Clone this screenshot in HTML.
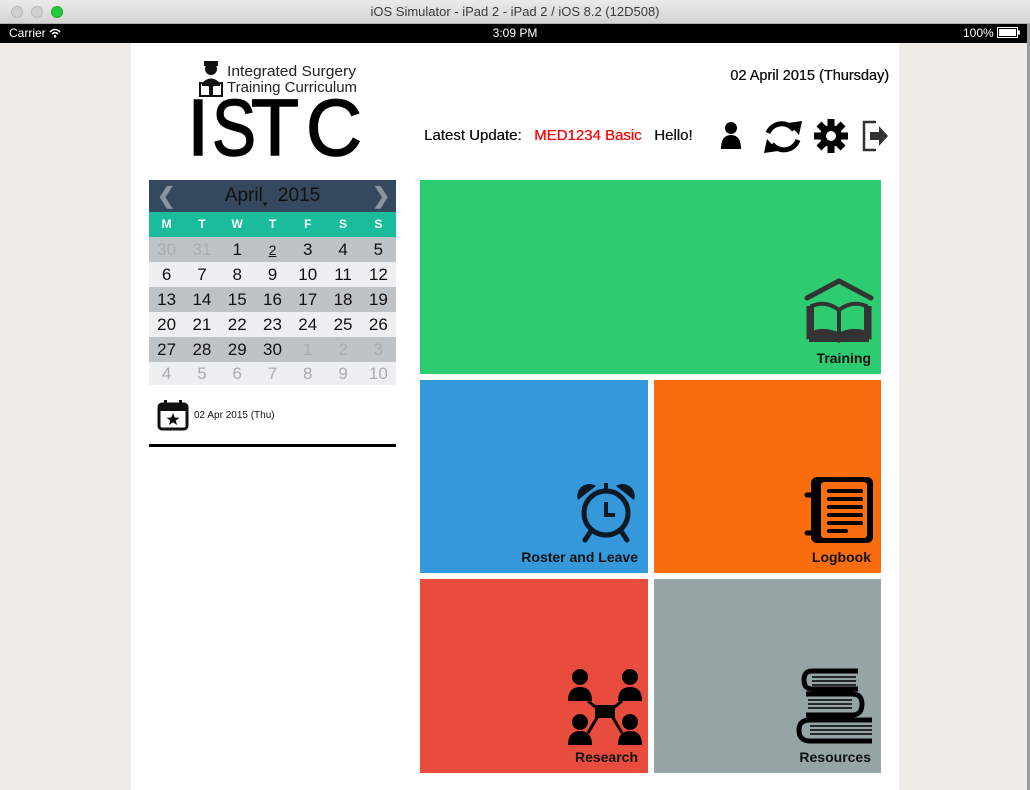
<!DOCTYPE html>
<html><head><meta charset="utf-8">
<style>
*{margin:0;padding:0;box-sizing:border-box}
body{width:1030px;height:790px;overflow:hidden;background:#eeebe6;font-family:"Liberation Sans",sans-serif;position:relative}
.abs{position:absolute}
#title{left:0;top:0;width:1030px;height:24px;background:linear-gradient(#ebebeb,#d4d4d4);border-bottom:1px solid #b0b0b0;text-align:center;font-size:13px;line-height:24px;color:#3c3c3c}
.dot{position:absolute;top:6px;width:12px;height:12px;border-radius:50%;background:#d0d0d0;border:1px solid #b8b8b8}
#status{left:0;top:24px;width:1027px;height:19px;background:#000;color:#fff;font-size:12px;line-height:19px}
#page{left:131px;top:43px;width:768px;height:747px;background:#fff}
.cal{left:149px;width:247px}
.row{position:absolute;left:149px;width:247px;height:25px;display:flex}
.row span{flex:1;text-align:center;font-size:17px;line-height:26px;color:#111}
.row span.g{color:#a9adb0}
.tile{position:absolute}
.lab{position:absolute;right:10px;bottom:8px;font-weight:bold;font-size:14px;color:#111}
</style></head><body>
<div id="title" class="abs">iOS Simulator - iPad 2 - iPad 2 / iOS 8.2 (12D508)
<div class="dot" style="left:11px"></div><div class="dot" style="left:31px"></div><div class="dot" style="left:51px;background:#27c93f;border-color:#1aab29"></div></div>
<div id="status" class="abs"><span class="abs" style="left:9px">Carrier <svg width="12" height="10" viewBox="0 0 12 10" style="vertical-align:-1px"><path d="M1 4Q6 -1 11 4M3 6Q6 3 9 6" stroke="#fff" stroke-width="1.5" fill="none"/><circle cx="6" cy="8.3" r="1.3" fill="#fff"/></svg></span>
<span class="abs" style="left:0;width:1030px;text-align:center">3:09 PM</span>
<span class="abs" style="left:963px">100% <svg width="24" height="11" viewBox="0 0 24 11" style="vertical-align:-1px"><rect x="0.5" y="0.5" width="20" height="10" fill="none" stroke="#fff"/><rect x="2" y="2" width="17" height="7" fill="#fff"/><rect x="21" y="3.5" width="2" height="4" fill="#fff"/></svg></span></div>
<div id="page" class="abs"></div>

<!-- logo -->
<svg class="abs" style="left:190px;top:58px" width="180" height="102" viewBox="0 0 180 102">
<circle cx="21" cy="11" r="6" fill="#111"/><rect x="14" y="3" width="14" height="5" fill="#111"/>
<path d="M12 25 Q21 16 30 25 V28 H12Z" fill="#111"/>
<path d="M10 25 V38 H20 V28 Q15 25 10 25Z M32 25 V38 H22 V28 Q27 25 32 25Z" fill="none" stroke="#111" stroke-width="2"/>
<text x="37" y="18" font-family="Liberation Sans" font-size="14.5" fill="#222" textLength="129" lengthAdjust="spacingAndGlyphs">Integrated Surgery</text>
<text x="37" y="34" font-family="Liberation Sans" font-size="14.5" fill="#222" textLength="130" lengthAdjust="spacingAndGlyphs">Training Curriculum</text>
<g font-family="Liberation Sans" font-size="80" fill="#000" stroke="#000" stroke-width="1.5">
<text x="-3" y="97">I</text>
<text x="22" y="97" textLength="44" lengthAdjust="spacingAndGlyphs">S</text>
<text x="61" y="97" textLength="48" lengthAdjust="spacingAndGlyphs">T</text>
<text x="116" y="97" textLength="56" lengthAdjust="spacingAndGlyphs">C</text>
</g>
</svg>

<div class="abs" style="left:700px;top:68px;width:189px;text-align:right;font-size:14.5px;color:#111;text-shadow:0.3px 0 0 #111">02 April 2015 (Thursday)</div>
<div class="abs" style="left:424px;top:127px;font-size:15px;color:#111;text-shadow:0.3px 0 0 #111;white-space:nowrap">Latest Update:&nbsp;&nbsp;&nbsp;<span style="color:#f00;text-shadow:0.3px 0 0 #f00">MED1234 Basic</span>&nbsp;&nbsp;&nbsp;Hello!</div>
<!-- header icons -->
<svg class="abs" style="left:716px;top:115px" width="180" height="42" viewBox="0 0 180 42">
<circle cx="15" cy="13" r="6" fill="#000"/><path d="M5 34 Q5 20 15 20 Q25 20 25 34Z" fill="#000"/>
<g fill="none" stroke="#000" stroke-width="5"><path d="M52 18 A15 15 0 0 1 78 15"/><path d="M82 25 A15 15 0 0 1 56 29"/></g>
<path d="M72 8 L86 6 L83 20Z M62 36 L48 38 L51 24Z" fill="#000"/>
<g transform="translate(115 21)"><circle r="11" fill="#000"/><g fill="#000"><rect x="-3.5" y="-17" width="7" height="34"/><rect x="-3.5" y="-17" width="7" height="34" transform="rotate(45)"/><rect x="-3.5" y="-17" width="7" height="34" transform="rotate(90)"/><rect x="-3.5" y="-17" width="7" height="34" transform="rotate(135)"/></g><circle r="5" fill="#fff"/></g>
<path d="M160 7 H148 V35 H160" fill="none" stroke="#333" stroke-width="2.5"/><path d="M154 17 H163 V11 L172 21 L163 31 V25 H154Z" fill="#333"/>
</svg>

<!-- calendar -->
<div class="abs cal" style="top:180px;height:32px;background:#34495e"></div>
<div class="abs" style="left:157px;top:183px;color:#8a949e;font-size:22px;font-weight:bold">❮</div>
<div class="abs" style="left:372px;top:183px;color:#8a949e;font-size:22px;font-weight:bold">❯</div>
<div class="abs" style="left:149px;width:247px;top:185px;text-align:center;font-size:19px;color:#111">April<span style="font-size:9px;vertical-align:-6px">▾</span>&nbsp; 2015</div>
<div class="row" style="top:212px;background:#1abc9c"><span style="color:#fff;font-size:12px;font-weight:bold;line-height:25px">M</span><span style="color:#fff;font-size:12px;font-weight:bold;line-height:25px">T</span><span style="color:#fff;font-size:12px;font-weight:bold;line-height:25px">W</span><span style="color:#fff;font-size:12px;font-weight:bold;line-height:25px">T</span><span style="color:#fff;font-size:12px;font-weight:bold;line-height:25px">F</span><span style="color:#fff;font-size:12px;font-weight:bold;line-height:25px">S</span><span style="color:#fff;font-size:12px;font-weight:bold;line-height:25px">S</span></div>
<div class="row" style="top:237px;background:#bdc3c7"><span class="g">30</span><span class="g">31</span><span>1</span><span style="text-decoration:underline;font-size:14px">2</span><span>3</span><span>4</span><span>5</span></div>
<div class="row" style="top:262px;background:#ecf0f1"><span>6</span><span>7</span><span>8</span><span>9</span><span>10</span><span>11</span><span>12</span></div>
<div class="row" style="top:287px;background:#bdc3c7"><span>13</span><span>14</span><span>15</span><span>16</span><span>17</span><span>18</span><span>19</span></div>
<div class="row" style="top:312px;background:#ecf0f1"><span>20</span><span>21</span><span>22</span><span>23</span><span>24</span><span>25</span><span>26</span></div>
<div class="row" style="top:337px;background:#bdc3c7"><span>27</span><span>28</span><span>29</span><span>30</span><span class="g">1</span><span class="g">2</span><span class="g">3</span></div>
<div class="row" style="top:362px;height:23px;background:#ecf0f1"><span class="g" style="line-height:23px">4</span><span class="g" style="line-height:23px">5</span><span class="g" style="line-height:23px">6</span><span class="g" style="line-height:23px">7</span><span class="g" style="line-height:23px">8</span><span class="g" style="line-height:23px">9</span><span class="g" style="line-height:23px">10</span></div>
<svg class="abs" style="left:157px;top:399px" width="32" height="32" viewBox="0 0 32 32"><rect x="2" y="5" width="28" height="25" rx="3" fill="none" stroke="#111" stroke-width="3"/><rect x="2" y="5" width="28" height="7" fill="#111"/><rect x="7" y="1" width="3" height="6" fill="#111"/><rect x="22" y="1" width="3" height="6" fill="#111"/><path d="M16 14 L17.8 18.5 L22.5 18.7 L18.8 21.5 L20.1 26 L16 23.4 L11.9 26 L13.2 21.5 L9.5 18.7 L14.2 18.5Z" fill="#111"/></svg>
<div class="abs" style="left:194px;top:410px;font-size:10px;color:#111">02 Apr 2015 (Thu)</div>
<div class="abs" style="left:149px;top:444px;width:247px;height:3px;background:#000"></div>

<!-- tiles -->
<div class="tile" style="left:420px;top:180px;width:461px;height:194px;background:#2ecc71">
<svg class="abs" style="left:384px;top:98px" width="70" height="68" viewBox="0 0 70 68"><path d="M3 20 L35 3 L67 20" fill="none" stroke="#333" stroke-width="5" stroke-linecap="round"/><path d="M5 28 V58 Q20 52 35 62 Q50 52 65 58 V28" fill="none" stroke="#333" stroke-width="5"/><path d="M8 28 Q22 22 35 32 Q48 22 62 28 V55 Q48 50 35 57 Q22 50 8 55Z M35 32 V57" fill="none" stroke="#333" stroke-width="4"/><path d="M5 58 Q20 54 35 62 Q50 54 65 58 V64 H5Z" fill="#333"/></svg>
<div class="lab">Training</div></div>
<div class="tile" style="left:420px;top:380px;width:228px;height:193px;background:#3498db">
<svg class="abs" style="left:154px;top:98px" width="64" height="66" viewBox="0 0 64 66"><circle cx="32" cy="35" r="22" fill="none" stroke="#0d1a26" stroke-width="5"/><path d="M4 22 A12 12 0 0 1 22 8Z M60 22 A12 12 0 0 0 42 8Z" fill="#0d1a26"/><path d="M32 24 V37 H41" fill="none" stroke="#0d1a26" stroke-width="4"/><rect x="30" y="5" width="4" height="8" fill="#0d1a26"/><path d="M17 53 L11 62 M47 53 L53 62" stroke="#0d1a26" stroke-width="5" stroke-linecap="round"/></svg>
<div class="lab">Roster and Leave</div></div>
<div class="tile" style="left:654px;top:380px;width:227px;height:193px;background:#f96d0e">
<svg class="abs" style="left:150px;top:95px" width="70" height="70" viewBox="0 0 70 70"><rect x="7" y="2" width="62" height="66" rx="6" fill="#000"/><rect x="17" y="7" width="46" height="56" rx="3" fill="#f96d0e"/><g stroke="#000" stroke-width="4" stroke-linecap="round"><path d="M25 16 H57 M25 24 H57 M25 32 H57 M25 40 H57 M25 48 H57 M25 56 H42"/><path d="M3 20 H10 M3 58 H10" stroke-width="5"/></g></svg>
<div class="lab">Logbook</div></div>
<div class="tile" style="left:420px;top:579px;width:228px;height:194px;background:#e74c3c">
<svg class="abs" style="left:148px;top:88px" width="74" height="80" viewBox="0 0 74 80"><g fill="#000"><circle cx="12" cy="10" r="8"/><circle cx="62" cy="10" r="8"/><circle cx="12" cy="55" r="8"/><circle cx="62" cy="55" r="8"/><path d="M0 34 Q0 20 12 20 Q24 20 24 34Z M50 34 Q50 20 62 20 Q74 20 74 34Z M0 78 Q0 64 12 64 Q24 64 24 78Z M50 78 Q50 64 62 64 Q74 64 74 78Z"/><rect x="27" y="38" width="20" height="13"/></g><path d="M20 34 L30 42 M54 34 L44 42 M20 66 L30 49 M54 66 L44 49" stroke="#000" stroke-width="3"/></svg>
<div class="lab">Research</div></div>
<div class="tile" style="left:654px;top:579px;width:227px;height:194px;background:#95a5a6">
<svg class="abs" style="left:142px;top:89px" width="78" height="76" viewBox="0 0 78 76"><g fill="none" stroke="#000" stroke-width="5"><path d="M62 3 H16 Q8 3 8 12 Q8 21 16 21 H62"/><path d="M10 26 H56 Q66 26 66 36 Q66 47 56 47 H10"/><path d="M76 52 H14 Q3 52 3 62 Q3 73 14 73 H76"/></g><g stroke="#000" stroke-width="1.5"><path d="M16 9 H60 M16 13 H60 M16 17 H60 M12 32 H56 M12 36 H56 M12 40 H56 M14 58 H76 M14 62 H76 M14 66 H76"/></g></svg>
<div class="lab">Resources</div></div>
<div class="abs" style="left:1027px;top:24px;width:3px;height:766px;background:#9a9a9a"></div>
</body></html>
